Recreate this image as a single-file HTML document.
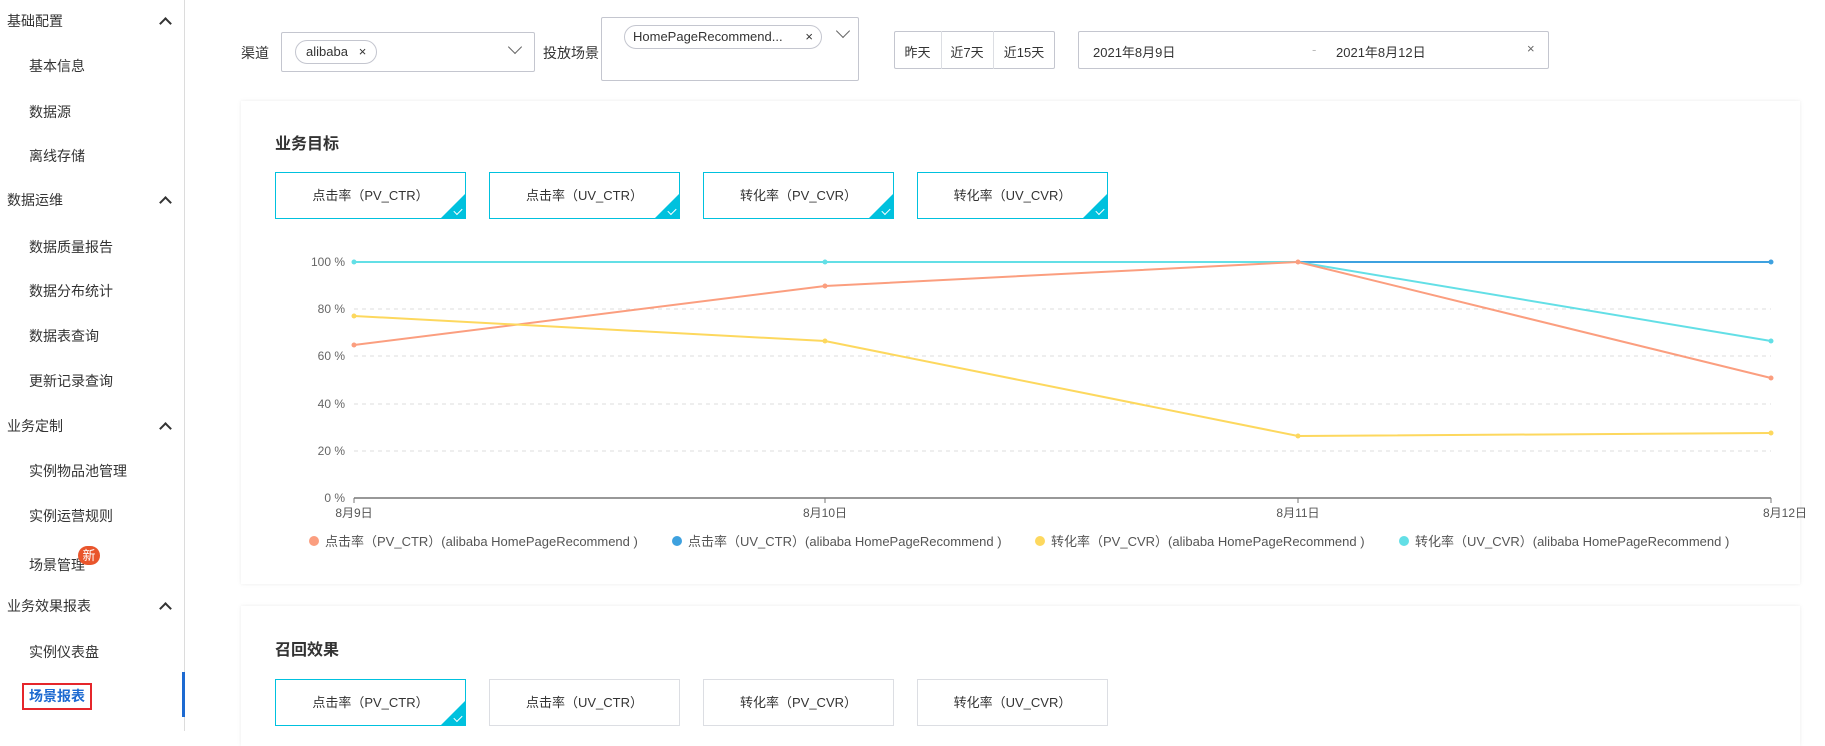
<!DOCTYPE html>
<html><head><meta charset="utf-8"><style>
*{margin:0;padding:0;box-sizing:border-box}
body{width:1825px;height:731px;overflow:hidden;background:#fff;font-family:"Liberation Sans","Noto Sans CJK SC",sans-serif;color:#333;position:relative}
.a{position:absolute;white-space:nowrap}
.side{position:absolute;left:0;top:0;width:185px;height:731px;border-right:1px solid #dcdcdc}
.g{position:absolute;left:7px;font-size:14px;color:#333;line-height:20px}
.s{position:absolute;left:29px;font-size:14px;color:#333;line-height:20px}
.chev{position:absolute;left:161px;width:9px;height:9px;border-left:2px solid #333;border-top:2px solid #333;transform:rotate(45deg)}
.box{position:absolute;border:1px solid #c4c6cf;background:#fff;border-radius:2px}
.tag{position:absolute;border:1px solid #c4c6cf;border-radius:12px;font-size:13px;color:#333;line-height:22px;padding:0 10px}
.card{position:absolute;left:241px;width:1559px;background:#fff;box-shadow:0 0 4px rgba(0,0,0,.08)}
.m{position:absolute;width:191px;height:47px;border:1px solid #00c1de;font-size:13px;line-height:45px;text-align:center;color:#333;overflow:hidden}
.m.off{border-color:#dcdee3}
.m .tri{position:absolute;right:0;bottom:0;width:0;height:0;border-left:24px solid transparent;border-bottom:24px solid #00c1de}
.m .ck{position:absolute;right:3px;bottom:5px;width:8px;height:5px;border-left:1.5px solid #fff;border-bottom:1.5px solid #fff;transform:rotate(-45deg)}
.dv{position:absolute;width:10px;height:10px;border-right:1.5px solid #666;border-bottom:1.5px solid #666;transform:rotate(45deg)}
</style></head><body>
<div class="side">
<div class="g" style="top:11px">基础配置</div><div class="chev" style="top:19px"></div>
<div class="s" style="top:56px">基本信息</div>
<div class="s" style="top:102px">数据源</div>
<div class="s" style="top:146px">离线存储</div>
<div class="g" style="top:190px">数据运维</div><div class="chev" style="top:198px"></div>
<div class="s" style="top:237px">数据质量报告</div>
<div class="s" style="top:281px">数据分布统计</div>
<div class="s" style="top:326px">数据表查询</div>
<div class="s" style="top:371px">更新记录查询</div>
<div class="g" style="top:416px">业务定制</div><div class="chev" style="top:424px"></div>
<div class="s" style="top:461px">实例物品池管理</div>
<div class="s" style="top:506px">实例运营规则</div>
<div class="s" style="top:555px">场景管理</div>
<div class="a" style="left:78px;top:546px;width:22px;height:19px;border-radius:10px;background:#e9552c;color:#fff;font-size:13px;line-height:19px;text-align:center">新</div>
<div class="g" style="top:596px">业务效果报表</div><div class="chev" style="top:604px"></div>
<div class="s" style="top:642px">实例仪表盘</div>
<div class="a" style="left:22px;top:683px;width:70px;height:27px;border:2px solid #e5262b"></div>
<div class="s" style="top:686px;color:#1d6ad1;font-weight:bold">场景报表</div>
<div class="a" style="left:182px;top:672px;width:3px;height:45px;background:#1d6ad1"></div>
</div>

<div class="a" style="left:241px;top:43px;font-size:14px">渠道</div>
<div class="box" style="left:281px;top:32px;width:254px;height:40px"></div>
<div class="tag" style="left:295px;top:40px">alibaba &nbsp;&nbsp;×</div>
<div class="dv" style="left:510px;top:42px"></div>
<div class="a" style="left:543px;top:43px;font-size:14px">投放场景</div>
<div class="box" style="left:601px;top:17px;width:258px;height:64px"></div>
<div class="tag" style="left:624px;top:25px;width:198px;padding:0 8px">HomePageRecommend... <span style="float:right">×</span></div>
<div class="dv" style="left:838px;top:26px"></div>
<div class="box" style="left:894px;top:31px;width:161px;height:38px"></div>
<div class="a" style="left:941px;top:31px;width:1px;height:38px;background:#dcdee3"></div>
<div class="a" style="left:993px;top:31px;width:1px;height:38px;background:#dcdee3"></div>
<div class="a" style="left:894px;top:42px;width:47px;text-align:center;font-size:13px">昨天</div>
<div class="a" style="left:941px;top:42px;width:52px;text-align:center;font-size:13px">近7天</div>
<div class="a" style="left:993px;top:42px;width:62px;text-align:center;font-size:13px">近15天</div>
<div class="box" style="left:1078px;top:31px;width:471px;height:38px"></div>
<div class="a" style="left:1093px;top:42px;font-size:13px">2021年8月9日</div>
<div class="a" style="left:1312px;top:42px;font-size:13px;color:#bbb">-</div>
<div class="a" style="left:1336px;top:42px;font-size:13px">2021年8月12日</div>
<div class="a" style="left:1527px;top:41px;font-size:13px;color:#666">×</div>

<div class="card" style="top:101px;height:483px"></div>
<div class="a" style="left:275px;top:130px;font-size:16px;font-weight:bold">业务目标</div>
<div class="m" style="left:275px;top:172px">点击率（PV_CTR）<div class="tri"></div><div class="ck"></div></div>
<div class="m" style="left:489px;top:172px">点击率（UV_CTR）<div class="tri"></div><div class="ck"></div></div>
<div class="m" style="left:703px;top:172px">转化率（PV_CVR）<div class="tri"></div><div class="ck"></div></div>
<div class="m" style="left:917px;top:172px">转化率（UV_CVR）<div class="tri"></div><div class="ck"></div></div>

<svg class="a" style="left:0;top:0" width="1825" height="731" font-family="Liberation Sans, Noto Sans CJK SC, sans-serif">
<g stroke="#ddd" stroke-dasharray="4,4" stroke-width="1">
<line x1="354" y1="309" x2="1771" y2="309"/><line x1="354" y1="356" x2="1771" y2="356"/>
<line x1="354" y1="404" x2="1771" y2="404"/><line x1="354" y1="451" x2="1771" y2="451"/>
</g>
<g fill="#666" font-size="12" text-anchor="end">
<text x="345" y="266">100 %</text><text x="345" y="313">80 %</text><text x="345" y="360">60 %</text>
<text x="345" y="408">40 %</text><text x="345" y="455">20 %</text><text x="345" y="502">0 %</text>
</g>
<line x1="354" y1="498" x2="1771" y2="498" stroke="#777" stroke-width="1.5"/>
<g stroke="#777"><line x1="354" y1="498" x2="354" y2="503"/><line x1="825" y1="498" x2="825" y2="503"/><line x1="1298" y1="498" x2="1298" y2="503"/><line x1="1771" y1="498" x2="1771" y2="503"/></g>
<g fill="#555" font-size="12" text-anchor="middle">
<text x="354" y="517">8月9日</text><text x="825" y="517">8月10日</text><text x="1298" y="517">8月11日</text><text x="1785" y="517">8月12日</text>
</g>
<g fill="none" stroke-width="2">
<polyline stroke="#3ea1df" points="354,262 825,262 1298,262 1771,262"/>
<polyline stroke="#63dfe6" points="354,262 825,262 1298,262 1771,341"/>
<polyline stroke="#fb9e7f" points="354,345 825,286 1298,262 1771,378"/>
<polyline stroke="#fdd85e" points="354,316 825,341 1298,436 1771,433"/>
</g>
<g fill="#63dfe6"><circle cx="354" cy="262" r="2.5"/><circle cx="825" cy="262" r="2.5"/><circle cx="1771" cy="341" r="2.5"/></g>
<circle cx="1771" cy="262" r="2.5" fill="#3ea1df"/>
<g fill="#fb9e7f"><circle cx="354" cy="345" r="2.5"/><circle cx="825" cy="286" r="2.5"/><circle cx="1298" cy="262" r="2.5"/><circle cx="1771" cy="378" r="2.5"/></g>
<g fill="#fdd85e"><circle cx="354" cy="316" r="2.5"/><circle cx="825" cy="341" r="2.5"/><circle cx="1298" cy="436" r="2.5"/><circle cx="1771" cy="433" r="2.5"/></g>
<g font-size="13" fill="#555">
<circle cx="314" cy="541" r="5" fill="#fb9e7f"/><text x="325" y="546">点击率（PV_CTR）(alibaba HomePageRecommend )</text>
<circle cx="677" cy="541" r="5" fill="#3ea1df"/><text x="688" y="546">点击率（UV_CTR）(alibaba HomePageRecommend )</text>
<circle cx="1040" cy="541" r="5" fill="#fdd85e"/><text x="1051" y="546">转化率（PV_CVR）(alibaba HomePageRecommend )</text>
<circle cx="1404" cy="541" r="5" fill="#63dfe6"/><text x="1415" y="546">转化率（UV_CVR）(alibaba HomePageRecommend )</text>
</g>
</svg>

<div class="card" style="top:606px;height:140px"></div>
<div class="a" style="left:275px;top:636px;font-size:16px;font-weight:bold">召回效果</div>
<div class="m" style="left:275px;top:679px">点击率（PV_CTR）<div class="tri"></div><div class="ck"></div></div>
<div class="m off" style="left:489px;top:679px">点击率（UV_CTR）</div>
<div class="m off" style="left:703px;top:679px">转化率（PV_CVR）</div>
<div class="m off" style="left:917px;top:679px">转化率（UV_CVR）</div>
</body></html>
